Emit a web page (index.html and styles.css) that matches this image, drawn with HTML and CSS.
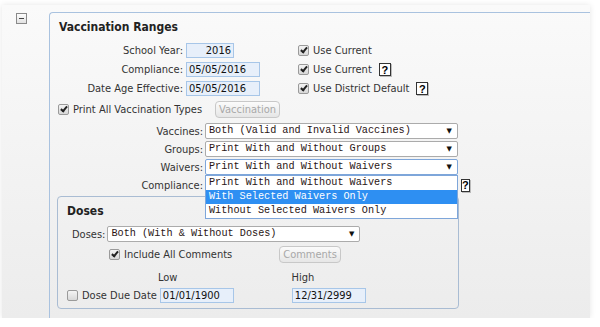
FILE: index.html
```html
<!DOCTYPE html>
<html lang="en">
<head>
    <meta charset="UTF-8">
    <title>Vaccination Ranges</title>
    <link rel="stylesheet" href="styles.css">
</head>
<body>
    <div class="frame">
        <div class="toggle"><span></span></div>

        <div class="panel">
            <div class="legend">Vaccination Ranges</div>

            <div class="dates">
                <label>School Year:</label>
                <div><span class="box year">2016</span></div>
                <div class="opt"><span class="cb on"></span>Use Current</div>

                <label>Compliance:</label>
                <div><span class="box date">05/05/2016</span></div>
                <div class="opt"><span class="cb on"></span>Use Current <span class="help">?</span></div>

                <label>Date Age Effective:</label>
                <div><span class="box date">05/05/2016</span></div>
                <div class="opt"><span class="cb on"></span>Use District Default <span class="help">?</span></div>
            </div>

            <div class="print-row">
                <span class="cb on"></span>Print All Vaccination Types
                <span class="btn">Vaccination</span>
            </div>

            <div class="selects">
                <label>Vaccines:</label>
                <div class="select">Both (Valid and Invalid Vaccines)<span class="arrow">&#9660;</span></div>

                <label>Groups:</label>
                <div class="select">Print With and Without Groups<span class="arrow">&#9660;</span></div>

                <label>Waivers:</label>
                <div class="select-wrap">
                    <div class="select focus">Print With and Without Waivers<span class="arrow">&#9660;</span></div>
                    <ul class="dropdown">
                        <li>Print With and Without Waivers</li>
                        <li class="picked">With Selected Waivers Only</li>
                        <li>Without Selected Waivers Only</li>
                    </ul>
                </div>

                <label>Compliance:</label>
                <div class="compliance-cell"><span class="help">?</span></div>
            </div>

            <div class="doses">
                <div class="legend">Doses</div>

                <div class="doses-row">
                    <label>Doses:</label>
                    <div class="select wide">Both (With &amp; Without Doses)<span class="arrow">&#9660;</span></div>
                </div>

                <div class="comments-row">
                    <span class="cb on"></span>Include All Comments
                    <span class="btn">Comments</span>
                </div>

                <div class="range-head">
                    <span class="low">Low</span>
                    <span class="high">High</span>
                </div>

                <div class="range-row">
                    <span class="cb"></span>Dose Due Date
                    <span class="box date low-box">01/01/1900</span>
                    <span class="box date high-box">12/31/2999</span>
                </div>
            </div>
        </div>
    </div>
</body>
</html>
```

FILE: styles.css
```css
body {
    margin: 0;
    background: #fff;
    font-family: "DejaVu Sans Condensed", "DejaVu Sans", sans-serif;
    font-size: 11px;
    color: #333;
}

.frame {
    display: flex;
    align-items: flex-start;
    margin: 5px 10px 0 2px;
    height: 306px;
    padding-top: 7px;
    background: linear-gradient(#fafafa, #ececec);
    box-shadow: 0 0 6px rgba(0,0,0,0.10);
}

.toggle {
    flex-shrink: 0;
    width: 9px;
    height: 9px;
    margin: 1px 0 0 14px;
    border: 1px solid #8a8a8a;
    background: linear-gradient(#fdfdfd, #e2e2e2);
    display: flex;
    align-items: center;
    justify-content: center;
}

.toggle span {
    width: 5px;
    height: 1px;
    background: #444;
}

.panel {
    flex: 1;
    align-self: stretch;
    min-width: 0;
    margin-left: 22px;
    padding: 6px 0 0 9px;
    border-top: 1px solid #a9c2df;
    border-left: 1px solid #a9c2df;
    border-radius: 4px 0 0 0;
}

.legend {
    font-weight: bold;
    font-size: 12px;
    line-height: 16px;
    color: #222;
}

label {
    text-align: right;
    white-space: nowrap;
}

.dates {
    display: grid;
    grid-template-columns: 124px 109px auto;
    grid-auto-rows: 19px;
    column-gap: 3px;
    align-items: center;
    margin-top: 6px;
}

.dates > div {
    display: flex;
    align-items: center;
}

.box {
    display: inline-block;
    height: 13px;
    line-height: 13px;
    padding: 0 2px;
    border: 1px solid #a7c6e8;
    background: #e7effa;
    color: #111;
}

.year {
    width: 42px;
    text-align: right;
}

.date {
    width: 68px;
}

.opt .help {
    margin-left: 7px;
}

.cb {
    display: inline-block;
    position: relative;
    flex-shrink: 0;
    width: 9px;
    height: 9px;
    margin-right: 4px;
    border: 1px solid #9a9a9a;
    border-radius: 2px;
    background: linear-gradient(#f4f4f4, #d8d8d8);
}

.cb.on::after {
    content: "";
    position: absolute;
    left: 3px;
    top: 0;
    width: 2px;
    height: 5px;
    border: solid #222;
    border-width: 0 2px 2px 0;
    transform: rotate(40deg);
}

.help {
    display: inline-flex;
    align-items: center;
    justify-content: center;
    width: 10px;
    height: 11px;
    border: 1px solid #333;
    background: #fff;
    box-shadow: 1px 1px 0 #bbb;
    font-family: "Liberation Sans", Arial, sans-serif;
    font-weight: bold;
    font-size: 11px;
    color: #000;
}

.print-row {
    display: flex;
    align-items: center;
    height: 19px;
    margin: 2px 0 0 -1px;
}

.btn {
    display: inline-block;
    height: 15px;
    line-height: 15px;
    padding: 0 3px;
    border: 1px solid #c8c8c8;
    border-radius: 4px;
    background: linear-gradient(#fbfbfb, #e6e6e6);
    color: #a8a8a8;
}

.print-row .btn {
    margin-left: 13px;
}

.selects {
    display: grid;
    grid-template-columns: 144px 253px;
    grid-auto-rows: 18px;
    column-gap: 2px;
    align-items: center;
    margin-top: 3px;
}

.select {
    position: relative;
    box-sizing: border-box;
    height: 16px;
    line-height: 14px;
    padding-left: 3px;
    border: 1px solid #ababab;
    border-radius: 2px;
    background: #fff;
    font-family: "Liberation Mono", "Courier New", monospace;
    font-size: 10.2px;
    color: #2a1414;
    white-space: nowrap;
}

.select.focus {
    border-color: #7ea6da;
}

.arrow {
    position: absolute;
    right: 5px;
    top: 0;
    font-family: "DejaVu Sans", sans-serif;
    font-size: 7px;
    color: #111;
}

.select-wrap {
    position: relative;
}

.dropdown {
    position: absolute;
    z-index: 2;
    left: 0;
    top: 16px;
    width: 253px;
    box-sizing: border-box;
    margin: 0;
    padding: 0;
    list-style: none;
    border: 1px solid #7ea6da;
    background: #fff;
    font-family: "Liberation Mono", "Courier New", monospace;
    font-size: 10.2px;
    color: #2a1414;
    white-space: nowrap;
}

.dropdown li {
    height: 14px;
    line-height: 14px;
    padding-left: 3px;
}

.dropdown li.picked {
    background: #2e8ff2;
    color: #fff;
}

.compliance-cell {
    display: flex;
    padding-left: 256px;
}

.doses {
    width: 391px;
    height: 105px;
    margin: 2px 0 0 -2px;
    padding: 6px 0 0 9px;
    border: 1px solid #a9bcd3;
    border-radius: 4px;
}

.doses-row {
    display: flex;
    align-items: center;
    height: 18px;
    margin: 6px 0 0 5px;
}

.doses-row label {
    margin-right: 2px;
}

.select.wide {
    width: 253px;
}

.comments-row {
    display: flex;
    align-items: center;
    height: 19px;
    margin: 2px 0 0 42px;
}

.comments-row .btn {
    margin-left: 47px;
}

.range-head {
    display: flex;
    height: 14px;
    line-height: 14px;
    margin-top: 7px;
    padding-left: 91px;
}

.range-head .high {
    margin-left: 114px;
}

.range-row {
    display: flex;
    align-items: center;
    height: 16px;
    margin-top: 2px;
}

.range-row .low-box {
    margin-left: 3px;
}

.range-row .high-box {
    margin-left: 58px;
}
```
